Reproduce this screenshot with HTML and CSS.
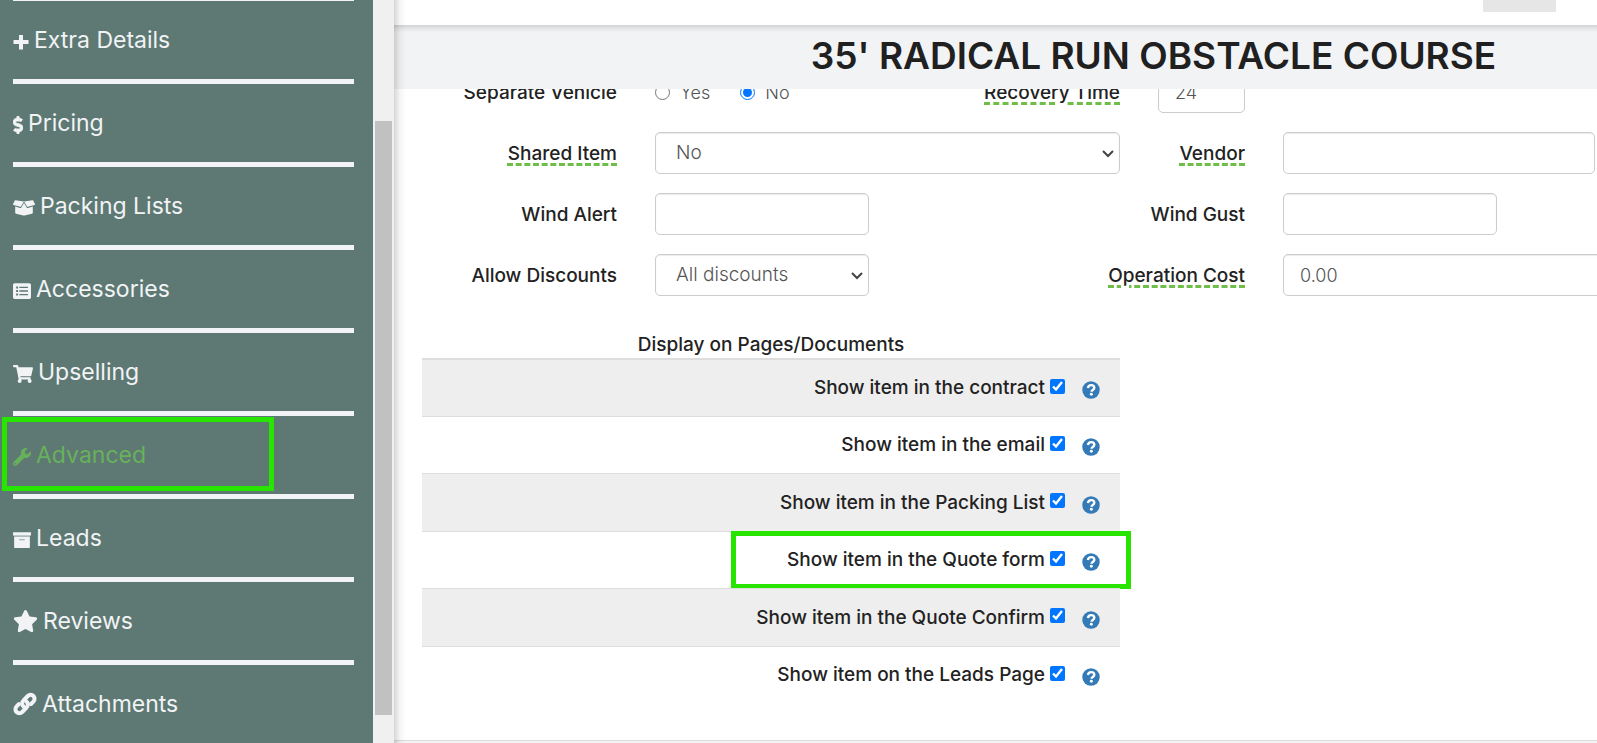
FILE: index.html
```html
<!DOCTYPE html>
<html lang="en">
<head>
<meta charset="utf-8">
<meta name="viewport" content="width=device-width, initial-scale=1">
<title>35' RADICAL RUN OBSTACLE COURSE</title>
<link rel="stylesheet" href="styles.css">
</head>
<body>
<svg class="sprite" aria-hidden="true">
  <symbol id="help" viewBox="0 0 512 512"><circle cx="256" cy="256" r="248" fill="#337ab7"/><path d="M168 198c8-56 42-82 92-82 54 0 90 30 90 76 0 62-78 66-78 112" fill="none" stroke="#fff" stroke-width="68"/><circle cx="266" cy="378" r="42" fill="#fff"/></symbol>
</svg>
<div class="app">
  <nav class="sidebar">
    <ul class="menu">
      <li class="menu-item"><a href="#"><svg class="icon w16" viewBox="0 0 16 16"><path d="M6 1h4v5h5.500v4H10v5.500H6V10H.5V6H6z"/></svg>Extra Details</a></li>
      <li class="menu-item"><a href="#"><svg class="icon w10" viewBox="0 0 288 512"><path d="M209 233l-108-31c-13-4-21-16-21-29 0-17 13-30 30-30h66c12 0 24 4 34 11 6 4 15 4 20-2l35-34c7-7 6-18-2-25C239 74 208 64 176 64V16c0-9-7-16-16-16h-32c-9 0-16 7-16 16v48h-3C45 64-6 119 1 184c4 46 40 84 84 97l102 30c13 4 21 16 21 29 0 17-13 30-30 30h-66c-12 0-24-4-34-11-6-4-15-4-20 2l-35 34c-7 7-6 18 2 25 24 19 55 29 87 29v47c0 9 7 16 16 16h32c9 0 16-7 16-16v-48c47-1 90-29 106-73 22-62-15-125-73-142z" stroke="currentColor" stroke-width="24"/></svg>Pricing</a></li>
      <li class="menu-item"><a href="#"><svg class="icon w22" viewBox="0 0 640 512"><path d="M425 256c-11 0-22-6-28-16l-77-128-77 128c-6 10-16 16-27 16-3 0-6 0-9-1L64 214v178c0 15 10 28 24 31l216 54c10 3 21 3 31 0l216-54c14-4 25-17 25-31V214l-143 41c-3 1-6 1-8 1zM638 140L587 38c-3-6-10-10-17-9L320 64l92 152c4 6 11 9 18 7l198-56c10-3 15-17 10-27zM53 38L2 140c-5 11 0 24 11 27l198 56c7 2 14-1 18-7l91-152L70 32c-7-1-14 0-17 6z"/></svg>Packing Lists</a></li>
      <li class="menu-item"><a href="#"><svg class="icon w18" viewBox="0 0 512 512"><path fill-rule="evenodd" d="M464 480H48c-27 0-48-21-48-48V80c0-27 21-48 48-48h416c27 0 48 21 48 48v352c0 27-21 48-48 48zM90 130v54h54v-54zM90 229v54h54v-54zM90 328v54h54v-54zM180 138v36h244v-36zM180 238v36h244v-36zM180 338v36h244v-36z"/></svg>Accessories</a></li>
      <li class="menu-item"><a href="#"><svg class="icon w20" viewBox="0 0 576 512"><path d="M528 301l47-208c4-15-8-29-23-29H159l-9-45C148 8 138 0 127 0H24C11 0 0 11 0 24v16c0 13 11 24 24 24h70l70 343c-17 10-28 28-28 49 0 31 25 56 56 56s56-25 56-56c0-16-6-30-17-40h210c-11 10-17 24-17 40 0 31 25 56 56 56s56-25 56-56c0-22-13-41-32-50l5-25c4-15-8-29-23-29H218l-7-32h294c11 0 21-8 23-19z"/></svg>Upselling</a></li>
      <li class="menu-item active"><a href="#" aria-current="page"><svg class="icon w18" viewBox="0 0 512 512"><path fill-rule="evenodd" d="M508 109c-2-9-13-12-20-5l-75 74-68-11-11-68 74-75c7-7 4-18-5-20-48-12-100 1-138 38-39 39-50 96-35 146L19 399c-25 25-25 65 0 90s65 25 90 0l211-211c50 14 106 4 146-36 37-37 50-88 42-133zM64 472c-13 0-24-11-24-24s11-24 24-24 24 11 24 24-11 24-24 24z"/></svg>Advanced</a></li>
      <li class="menu-item"><a href="#"><svg class="icon w18" viewBox="0 0 512 512"><path fill-rule="evenodd" d="M0 48c0-9 7-16 16-16h480c9 0 16 7 16 16v80H0zM32 160h448v304c0 9-7 16-16 16H48c-9 0-16-7-16-16z"/><path opacity=".6" d="M32 128h448v32H32z"/><path fill="#5e7974" opacity=".5" d="M180 226h152v40H180z"/></svg>Leads</a></li>
      <li class="menu-item"><a href="#"><svg class="icon w25" viewBox="0 0 576 512"><path d="M259 18l-65 132-146 21c-26 4-37 36-18 55l106 103-25 146c-5 26 23 46 46 34l131-69 131 69c23 12 51-8 46-34l-25-146 106-103c19-19 8-51-18-55l-146-21-65-132c-12-24-46-24-58 0z"/></svg>Reviews</a></li>
      <li class="menu-item"><a href="#"><svg class="icon w23" viewBox="0 0 24 24"><g fill="none" stroke="currentColor" stroke-width="4" stroke-linecap="round"><path d="M10.500 14.500a4 4 0 0 1 0-6L14.800 4a3.800 3.800 0 0 1 5.600 5.600L18 12"/><path d="M13.500 9.500a4 4 0 0 1 0 6L9.200 20a3.800 3.800 0 0 1-5.600-5.600L6 12"/></g></svg>Attachments</a></li>
    </ul>
    <div class="scrollbar"><div class="thumb"></div></div>
  </nav>
  <main class="main">
    <div class="topbar"><div class="topbar-block"></div></div>
    <h1 class="title">35' RADICAL RUN OBSTACLE COURSE</h1>
    <form class="content">
      <div class="row">
        <span class="label">Separate Vehicle</span>
        <div class="field choices">
          <label class="choice"><input type="radio" name="vehicle">Yes</label>
          <label class="choice"><input type="radio" name="vehicle" checked>No</label>
          <label class="hint recovery" for="recovery">Recovery Time</label>
        </div>
        <input class="control short" id="recovery" type="text" value="24">
      </div>
      <div class="row">
        <label class="label" for="shared"><span class="hint">Shared Item</span></label>
        <div class="field select-wrap"><select class="control" id="shared"><option>No</option></select><svg class="chevron" viewBox="0 0 12 8"><path d="M1 1l5 5 5-5"/></svg></div>
        <label class="label second" for="vendor"><span class="hint">Vendor</span></label>
        <input class="control last" id="vendor" type="text">
      </div>
      <div class="row">
        <label class="label" for="alert">Wind Alert</label>
        <input class="control field half" id="alert" type="text">
        <label class="label second" for="gust">Wind Gust</label>
        <input class="control last medium" id="gust" type="text">
      </div>
      <div class="row">
        <label class="label" for="discounts">Allow Discounts</label>
        <div class="field half select-wrap"><select class="control" id="discounts"><option>All discounts</option></select><svg class="chevron" viewBox="0 0 12 8"><path d="M1 1l5 5 5-5"/></svg></div>
        <label class="label second" for="cost"><span class="hint">Operation Cost</span></label>
        <input class="control last wide" id="cost" type="text" value="0.00">
      </div>
      <div class="row table-row">
        <table class="pages">
          <thead><tr><th colspan="2">Display on Pages/Documents</th></tr></thead>
          <tbody>
            <tr><td><label>Show item in the contract<input type="checkbox" checked></label></td><td class="help"><svg><use href="#help"/></svg></td></tr>
            <tr><td><label>Show item in the email<input type="checkbox" checked></label></td><td class="help"><svg><use href="#help"/></svg></td></tr>
            <tr><td><label>Show item in the Packing List<input type="checkbox" checked></label></td><td class="help"><svg><use href="#help"/></svg></td></tr>
            <tr class="marked"><td><label>Show item in the Quote form<input type="checkbox" checked></label></td><td class="help"><svg><use href="#help"/></svg></td></tr>
            <tr><td><label>Show item in the Quote Confirm<input type="checkbox" checked></label></td><td class="help"><svg><use href="#help"/></svg></td></tr>
            <tr><td><label>Show item on the Leads Page<input type="checkbox" checked></label></td><td class="help"><svg><use href="#help"/></svg></td></tr>
          </tbody>
        </table>
      </div>
    </form>
    <div class="footer"></div>
  </main>
</div>
</body>
</html>
```
FILE: styles.css
```css
*, *::before, *::after { box-sizing: border-box; }

body {
  margin: 0;
  background: #fff;
  color: #222;
  font: 500 19px/24px Inter, "Liberation Sans", sans-serif;
}

.sprite { position: absolute; width: 0; height: 0; }

.app {
  display: grid;
  grid-template-columns: 394px minmax(0, 1fr);
  height: 100vh;
  overflow: hidden;
}

/* Sidebar */
.sidebar {
  display: flex;
  min-height: 0;
  overflow: hidden;
  background: #5e7974;
}

.menu {
  flex: 1;
  margin: 0 19px 0 13px;
  padding: 0;
  border-top: 1px solid #f1f3f5;
  list-style: none;
}

.menu-item {
  position: relative;
  height: 83px;
  border-bottom: 5px solid #f1f3f5;
}

.menu-item a {
  display: flex;
  align-items: center;
  gap: 5px;
  height: 78px;
  color: #f1f3f5;
  font-size: 23px;
  font-weight: 400;
  text-decoration: none;
}

.menu-item.active a { color: #67b15b; }

.menu-item.active::after {
  content: "";
  position: absolute;
  top: 1px;
  left: -11px;
  width: 272px;
  height: 74px;
  border: 5px solid #27e500;
}

.icon { flex: none; height: 18px; margin-top: 3px; fill: currentColor; }
.w10 { width: 10px; }
.w16 { width: 16px; height: 16px; }
.w18 { width: 18px; }
.w20 { width: 20px; }
.w22 { width: 22px; }
.w23 { width: 24px; height: 24px; margin-top: 0; }
.w25 { width: 25px; height: 24px; margin-top: 0; }

.scrollbar {
  display: flex;
  width: 21px;
  padding: 121px 2px 28px;
  background: #f0f0f0;
}

.thumb { flex: 1; background: #c1c1c1; }

/* Main area */
.main {
  position: relative;
  display: flex;
  flex-direction: column;
  min-height: 0;
  overflow: hidden;
}

.main::before {
  content: "";
  position: absolute;
  inset: 0 auto 0 0;
  z-index: 3;
  width: 12px;
  background: linear-gradient(to right, rgba(0, 0, 0, .16), rgba(0, 0, 0, .04) 50%, transparent);
  pointer-events: none;
}

.topbar {
  display: flex;
  flex: none;
  justify-content: flex-end;
  height: 25px;
  padding-right: 41px;
}

.topbar-block { width: 73px; height: 12px; background: #e6e6e6; }

.title {
  position: relative;
  z-index: 2;
  flex: none;
  margin: 0;
  padding: 0 0 2px 316px;
  background: linear-gradient(#d0d2d3, #e6e8ea 4px, #f1f3f5 8px);
  color: #202020;
  font-size: 37px;
  font-weight: 600;
  line-height: 62px;
  text-align: center;
  white-space: nowrap;
}

.content {
  flex: 1;
  min-height: 0;
  margin: -18px 0 0;
  padding-left: 28px;
}

.row {
  display: grid;
  grid-template-columns: 195fr 38px 465fr 38px 87fr 38px 314fr;
  align-items: center;
  margin-bottom: 19px;
}

.label { grid-column: 1; justify-self: end; padding-top: 2px; white-space: nowrap; }
.label.second { grid-column: 4 / 6; }
.field { grid-column: 3; }
.half { width: 46%; }

.hint {
  text-decoration: underline dashed #6fbe4a 3px;
  text-underline-offset: 3px;
}

.choices { display: flex; align-items: center; }

.choice {
  display: flex;
  align-items: center;
  gap: 10px;
  margin-right: 30px;
  padding-top: 1px;
  color: #555;
  font-size: 18px;
  font-weight: 300;
}

.choice input { width: 15px; height: 15px; margin: 0; accent-color: #0075ff; }
.recovery { margin-left: auto; padding-top: 2px; }

.control {
  width: 100%;
  height: 42px;
  padding: 0 16px;
  border: 1px solid #ccc;
  border-radius: 5px;
  background: #fff;
  box-shadow: inset 0 1px 1px rgba(0, 0, 0, .08);
  color: #555;
  font: inherit;
  font-size: 18px;
  font-weight: 300;
}

select.control { display: block; padding: 0 20px; appearance: none; font-size: 19px; }
.short { grid-column: 5; }
.last { grid-column: 7; width: calc(100% - 2px); }
.control.half { width: 46%; }
.medium { width: 68%; }
.wide { width: calc(100% + 20px); }

.select-wrap { position: relative; }

.chevron {
  position: absolute;
  top: 18px;
  right: 6px;
  width: 12px;
  height: 8px;
  fill: none;
  stroke: #444;
  stroke-width: 2;
}

/* Pages table */
.table-row { padding-top: 16px; }

.pages {
  grid-column: 1 / 4;
  border-collapse: separate;
  border-spacing: 0;
}

.pages th { height: 27px; padding: 0; font-weight: 500; }
.pages tr { position: relative; }

.pages td {
  height: 58px;
  padding: 0;
  border-top: 1px solid #ddd;
  text-align: right;
}

.pages tbody tr:first-child td { border-top-width: 2px; }
.pages tbody tr:nth-child(odd) { background: #eee; }
.pages tbody tr:nth-child(even) td { height: 57px; }

.pages label { display: inline-flex; align-items: center; gap: 5px; }
.pages input { width: 15px; height: 15px; margin: 0 0 4px; accent-color: #0075ff; }
.pages .help { width: 55px; padding: 4px 20px 0 17px; }
.help svg { display: block; width: 18px; height: 18px; }

.marked::after {
  content: "";
  position: absolute;
  inset: 0 -11px -1px auto;
  width: 400px;
  border: 5px solid #27e500;
}

.footer { flex: none; height: 3px; border-top: 1px solid #ddd; background: #f3f3f3; }
```
